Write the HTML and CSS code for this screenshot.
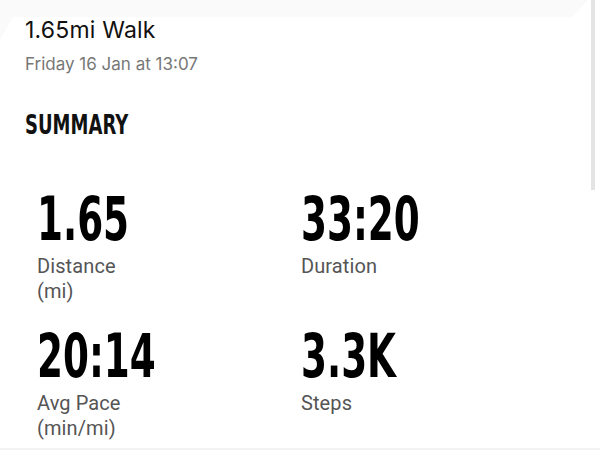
FILE: index.html
```html
<!DOCTYPE html>
<html>
<head>
<meta charset="utf-8">
<link rel="stylesheet" href="styles.css">
</head>
<body>
<div class="page">
  <div class="topband"><div class="topband-fill"></div></div>
  <div class="card">
    <h1 class="title">1.65mi Walk</h1>
    <div class="subtitle">Friday 16 Jan at 13:07</div>
    <h2 class="section"><span class="squeeze">SUMMARY</span></h2>
    <div class="stats">
      <div class="stat">
        <div class="value"><span class="squeeze">1.65</span></div>
        <div class="label">Distance<br>(mi)</div>
      </div>
      <div class="stat">
        <div class="value"><span class="squeeze">33:20</span></div>
        <div class="label">Duration</div>
      </div>
      <div class="stat">
        <div class="value"><span class="squeeze">20:14</span></div>
        <div class="label">Avg Pace<br>(min/mi)</div>
      </div>
      <div class="stat">
        <div class="value"><span class="squeeze">3.3K</span></div>
        <div class="label">Steps</div>
      </div>
    </div>
  </div>
  <div class="scrollbar"></div>
</div>
</body>
</html>
```
FILE: styles.css
```css
* { box-sizing: border-box; }
html, body { margin: 0; padding: 0; }
body { background: #ffffff; overflow: hidden; }
.page {
  position: relative;
  width: 600px;
  height: 450px;
  background: #fafafa;
  overflow: hidden;
}
.topband {
  height: 17px;
  background: #ffffff;
}
.topband-fill {
  height: 17px;
  background: #fafafa;
  clip-path: polygon(0 0, 588px 0, 572px 17px, 0 17px);
}
.card {
  background: #ffffff;
  height: 433px;
  clip-path: polygon(13px 0, 100% 0, 100% 100%, 0 100%, 0 23px);
  padding: 0 0 0 25px;
  border-bottom: 2px solid #f2f2f2;
}
.title {
  margin: 0;
  font-family: "Inter", "Open Sans", sans-serif;
  font-weight: 400;
  font-size: 23px;
  line-height: 26px;
  color: #111;
  letter-spacing: 0.2px;
}
.subtitle {
  margin-top: 11px;
  font-family: "Inter", "Open Sans", sans-serif;
  font-size: 17px;
  line-height: 20px;
  color: #777;
  letter-spacing: 0px;
}
.squeeze {
  display: inline-block;
  transform-origin: 0 50%;
}
.section {
  margin: 36px 0 0 0;
  font-family: "DejaVu Sans Condensed", "DejaVu Sans", sans-serif;
  font-weight: 700;
  font-size: 26px;
  line-height: 30px;
  color: #111;
}
.section .squeeze { transform: scaleX(0.77); }
.stats {
  display: grid;
  grid-template-columns: 264px 264px;
  margin-top: 54px;
  row-gap: 27px;
}
.stat {
  padding-left: 12px;
  height: 110px;
}
.value {
  font-family: "DejaVu Sans Condensed", "DejaVu Sans", sans-serif;
  font-weight: 700;
  font-size: 61px;
  line-height: 50px;
  height: 50px;
  color: #000;
}
.value .squeeze { transform: scaleX(0.68); }
.label {
  margin-top: 10px;
  font-family: "Roboto", sans-serif;
  font-size: 20px;
  line-height: 25px;
  color: #555;
  letter-spacing: 0.1px;
}
.scrollbar {
  position: absolute;
  top: 0;
  left: 591px;
  width: 4px;
  height: 190px;
  background: #e4e4e4;
}
```
